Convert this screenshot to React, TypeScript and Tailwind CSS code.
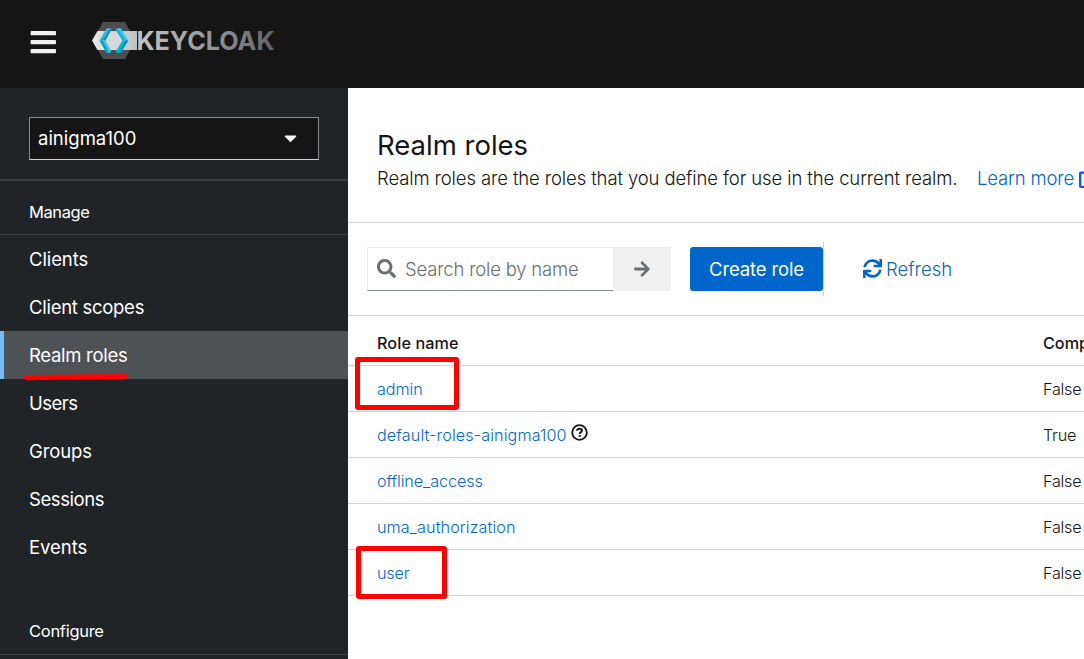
import React from "react";
import { FaArrowRight, FaCaretDown, FaExternalLinkAlt, FaSearch, FaSync } from "react-icons/fa";

const manageItems = [
  { label: "Clients", tracking: "tracking-[-0.1px]" },
  { label: "Client scopes", tracking: "tracking-[-0.28px]" },
  { label: "Realm roles", tracking: "tracking-[-0.3px]", active: true },
  { label: "Users", tracking: "tracking-[-0.5px]" },
  { label: "Groups", tracking: "tracking-[-0.1px]" },
  { label: "Sessions", tracking: "tracking-[-0.42px]" },
  { label: "Events", tracking: "tracking-[-0.05px]" },
];

const roles = [
  { name: "admin", composite: "False", tracking: "tracking-[-0.1px]", mark: "left-[-22px] top-[-9px] w-[104px] h-[53px]" },
  { name: "default-roles-ainigma100", composite: "True", tracking: "tracking-[0.1px]", help: true },
  { name: "offline_access", composite: "False", tracking: "tracking-[-0.1px]" },
  { name: "uma_authorization", composite: "False", tracking: "tracking-[0.07px]" },
  { name: "user", composite: "False", tracking: "tracking-[-0.2px]", mark: "left-[-21px] top-[-4px] w-[91px] h-[53px]" },
];

function MenuIcon() {
  return (
    <svg className="mt-[8px] h-[24px] w-[27px]" viewBox="0 0 27 24" fill="#f0f0f0">
      <rect x="0.600" y="1" width="25.400" height="4.200" rx="0.800" />
      <rect x="0.600" y="10" width="25.400" height="4.200" rx="0.800" />
      <rect x="0.600" y="19" width="25.400" height="4.300" rx="0.800" />
    </svg>
  );
}

function Logo() {
  return (
    <svg className="ml-[35px] h-[38px] w-[184px] overflow-visible" viewBox="0 0 184 38" aria-label="Keycloak">
      <defs>
        <linearGradient id="word" gradientUnits="userSpaceOnUse" x1="45" y1="0" x2="183" y2="0">
          <stop offset="0" stopColor="#c4c4c4" />
          <stop offset="0.5" stopColor="#999" />
          <stop offset="1" stopColor="#636363" />
        </linearGradient>
        <linearGradient id="band" x1="0" y1="0" x2="1" y2="0">
          <stop offset="0" stopColor="#e8e8e8" />
          <stop offset="1" stopColor="#c2c2c2" />
        </linearGradient>
      </defs>
      <path d="M11 0H33L43.500 18.500 33 37H11L0.500 18.500Z" fill="#4d4d4d" />
      <path d="M5.500 9H45V28H5.500L0 18.500Z" fill="url(#band)" />
      <path d="M16 9H27L33 18.500 27 28H16L10 18.500Z" fill="#d7d7d7" />
      <path d="M14 7.200Q16.500 5 19.500 7.200L13.300 18.500H7.500Z" fill="#33b9d8" />
      <path d="M19.500 7.200 13.300 18.500H10.500L17.500 7.500Z" fill="#008fad" />
      <path d="M7.500 18.500H13.300L19.500 29.500Q17 32 14.500 30.500Z" fill="#33c6e9" />
      <path d="M7.500 18.500H10.500L17 31 14.500 30.500Z" fill="#00a5c8" />
      <path d="M23.500 7.500Q26 5 29 6.500L36.200 18.500H30.500Z" fill="#33c6e9" />
      <path d="M23.500 7.500 26 7 33 18.500H30.500Z" fill="#00b8e3" />
      <path d="M30.500 18.500H36.200L29 30.700Q26.500 32 23.500 29.700Z" fill="#00b8e3" />
      <path d="M33.500 18.500H36.200L29 30.700 26.500 30.500Z" fill="#008fad" />
      <text x="44.500" y="28" textLength="138" lengthAdjust="spacingAndGlyphs" fill="url(#word)" className="font-['Inter',sans-serif] text-[26px] font-bold">KEYCLOAK</text>
    </svg>
  );
}

function HelpIcon() {
  return (
    <svg className="ml-1 mb-[5px] size-[17px] shrink-0" viewBox="0 0 17 17" fill="none" stroke="#151515">
      <circle cx="8.500" cy="8.500" r="7.300" strokeWidth="1.800" />
      <path d="M6 6.800C6.100 5.300 7.200 4.700 8.600 4.700C10.100 4.700 11 5.500 11 6.600C11 8.200 8.700 8 8.700 9.900" strokeWidth="1.900" />
      <path d="M8.700 11V12.800" strokeWidth="2" />
    </svg>
  );
}

export default function App() {
  return (
    <div className="flex h-[659px] w-[1084px] flex-col overflow-hidden bg-white font-['Inter',sans-serif] text-[18.500px] font-light text-[#151515]">
      <header className="flex h-[88px] shrink-0 items-start bg-[#151515] pl-[30px] pt-[22px]">
        <MenuIcon />
        <Logo />
      </header>
      <div className="flex min-h-0 flex-1">
        <nav className="w-[348px] shrink-0 bg-[#212427] font-normal text-white">
          <div className="h-[93px] border-b-2 border-[#3c3f42] px-[29px] pt-[29px]">
            <button className="flex h-[43px] w-[290px] items-center justify-between border border-[#8a8d90] border-b-[#d2d2d2] bg-[#151515] pl-[8px] pr-[20px]">
              <span>ainigma100</span>
              <FaCaretDown className="mb-px h-[20px] w-[15px]" />
            </button>
          </div>
          <h2 className="flex h-[54px] items-end border-b border-[#3c3f42] pb-[10px] pl-[29px] text-[16.500px] leading-[24px] tracking-[-0.4px]">Manage</h2>
          <ul>
            {manageItems.map((item) => (
              <li key={item.label} className={item.active ? "relative flex h-12 items-center border-l-4 border-[#73bcf7] bg-[#4f5255] pl-[25px] pt-[2px]" : "flex h-12 items-center pl-[29px] pt-[2px]"}>
                <span className={item.tracking}>{item.label}</span>
                {item.active && (
                  <svg className="absolute left-[19px] top-[42px] h-[8px] w-[106px]" viewBox="0 0 106 8">
                    <path d="M3.500 4.700 34 4.200 101.500 3.500" stroke="#f00" strokeWidth="5" strokeLinecap="round" fill="none" />
                  </svg>
                )}
              </li>
            ))}
          </ul>
          <h2 className="mt-[30px] flex h-[54px] items-end border-b border-[#3c3f42] pb-[11px] pl-[29px] text-[16.500px] leading-[24px] tracking-[-0.28px]">Configure</h2>
        </nav>
        <main className="min-w-0 flex-1 overflow-hidden">
          <section className="h-[135px] border-b border-[#d2d2d2] pl-[29px] pt-[39px]">
            <h1 className="text-[27.500px] font-normal leading-[36px]">Realm roles</h1>
            <div className="flex h-[32px] items-center whitespace-nowrap">
              <p className="w-[600px] shrink-0 tracking-[-0.115px]">Realm roles are the roles that you define for use in the current realm.</p>
              <a className="flex shrink-0 items-center text-[#06c]"><span className="w-[102px] tracking-[-0.15px]">Learn more</span><FaExternalLinkAlt className="mb-[2px] size-[19px] shrink-0" /></a>
            </div>
          </section>
          <div className="flex h-[92px] items-center pl-[19px]">
            <div className="flex h-[44px] w-[246px] items-center border border-r-0 border-[#f0f0f0] border-b-[#8a8d90] pl-[9px]">
              <FaSearch className="mb-[2px] size-[19px] text-[#6a6e73]" />
              <span className="ml-[9px] pt-[2px] tracking-[-0.2px] text-[#6a6e73]">Search role by name</span>
            </div>
            <button className="flex h-[44px] w-[58px] items-center justify-center bg-[#f0f0f0]"><FaArrowRight className="mb-[1px] size-[18px] text-[#6a6e73]" /></button>
            <button className="ml-[19px] h-[44px] w-[133px] rounded-[3px] bg-[#06c] pt-[2px] font-normal tracking-[-0.15px] text-white">Create role</button>
            <div className="h-[54px] w-px bg-[#d2d2d2]" />
            <a className="ml-[39px] flex items-center text-[#06c]"><FaSync className="mb-px size-[19px]" /><span className="ml-[4px] pt-[2px]">Refresh</span></a>
          </div>
          <div className="text-[16.200px]">
            <div className="flex h-[51px] items-center border-y border-[#d2d2d2] pl-[29px] pt-[5px] font-medium">
              <span className="w-[666px] shrink-0 tracking-[0.1px]">Role name</span><span>Composite</span>
            </div>
            {roles.map((role) => (
              <div key={role.name} className="relative flex h-[46px] items-center border-b border-[#d2d2d2] pl-[29px] pt-[1px]">
                <div className="flex w-[666px] shrink-0 items-center text-[#06c]">
                  <span className={role.tracking}>{role.name}</span>
                  {role.help && <HelpIcon />}
                </div>
                <span className="tracking-[-0.25px]">{role.composite}</span>
                {role.mark && <div className="absolute inset-0 pl-[29px]"><div className="relative"><div className={"absolute rounded-[3px] border-[5px] border-[#f00] " + role.mark} /></div></div>}
              </div>
            ))}
          </div>
        </main>
      </div>
    </div>
  );
}
